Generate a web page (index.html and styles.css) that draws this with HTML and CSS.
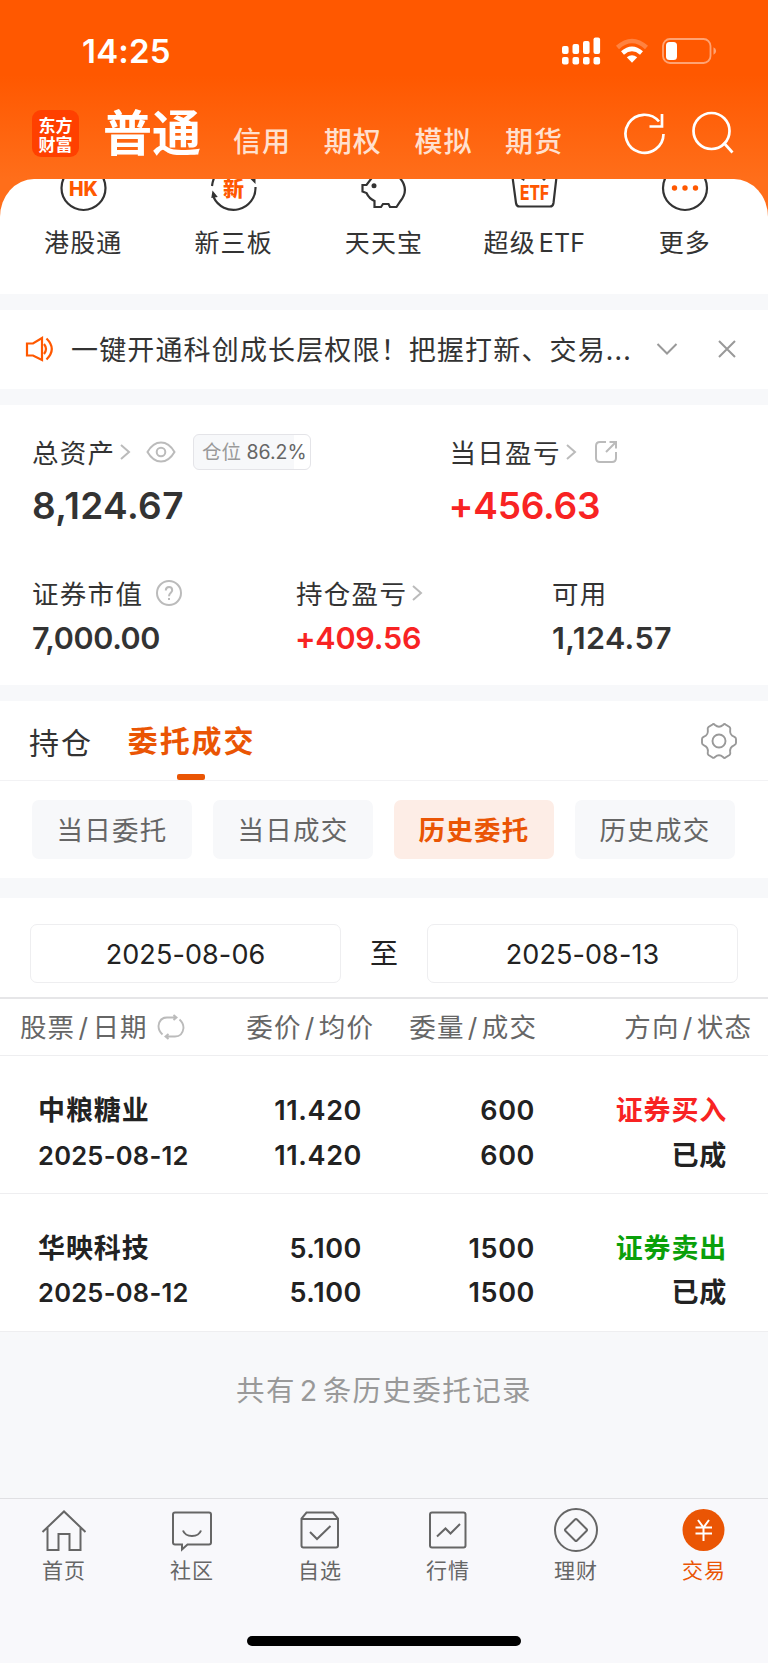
FILE: index.html
```html
<!DOCTYPE html>
<html lang="zh-CN">
<head>
<meta charset="utf-8">
<title>东方财富 交易</title>
<link rel="stylesheet" href="styles.css">
</head>
<body>
<div class="app">
  <div class="top">
    <div class="status">
      <span class="time">14:25</span>
      <svg class="signal" width="39" height="28" viewBox="0 0 39 28" fill="#fff"><rect x="0" y="9" width="6.6" height="8" rx="2"/><rect x="10.500" y="7" width="6.600" height="10" rx="2"/><rect x="21" y="4" width="6.600" height="13" rx="2"/><rect x="31.500" y="0.500" width="6.600" height="16.500" rx="2"/><rect x="0" y="20" width="6.600" height="7.500" rx="2"/><rect x="10.500" y="20" width="6.600" height="7.500" rx="2"/><rect x="21" y="20" width="6.600" height="7.500" rx="2"/><rect x="31.500" y="20" width="6.600" height="7.500" rx="2"/></svg>
      <svg class="wifi" width="34" height="26" viewBox="0 0 34 26" fill="none"><path d="M2.500 9.500Q17-3.500 31.500 9.500" stroke="#fff" stroke-opacity=".25" stroke-width="4.500"/><path d="M7.500 15Q17 6.800 26.500 15" stroke="#fff" stroke-width="4.500"/><path d="M11.800 19.300Q17 15.300 22.200 19.300L17 24.800Z" fill="#fff"/></svg>
      <svg class="battery" width="55" height="26" viewBox="0 0 55 26"><rect x="1" y="1" width="47.500" height="24" rx="7" fill="none" stroke="#fff" stroke-opacity=".45" stroke-width="1.800"/><rect x="4" y="4" width="11" height="18" rx="3.500" fill="#fff"/><path d="M51.500 9.300q2.600 1 2.600 3.700t-2.600 3.700z" fill="#fff" fill-opacity=".45"/></svg>
    </div>
    <div class="nav">
      <div class="logo"><span>东方</span><span>财富</span></div>
      <b class="nav-on">普通</b>
      <span class="nav-item">信用</span><span class="nav-item">期权</span><span class="nav-item">模拟</span><span class="nav-item">期货</span>
      <svg class="nav-icons" width="112" height="44" viewBox="0 0 112 44" fill="none" stroke="#fff" stroke-width="2.700"><path d="M40.500 23A19 19 0 1 1 36 10.500"/><path d="M39 3V15.500H26.500"/><circle cx="88.500" cy="20" r="18"/><path d="M100.500 31.500L109.500 41.500"/></svg>
    </div>
    <div class="panel">
      <div class="quick">
        <svg width="48" height="34" viewBox="0 16 48 34"><circle cx="24.500" cy="25" r="22" fill="none" stroke="#333" stroke-width="2.200"/><text class="ic" x="24.500" y="32.500" font-size="19.500">HK</text></svg>
        <span>港股通</span>
      </div>
      <div class="quick">
        <svg width="48" height="34" viewBox="0 16 48 34"><path d="M3.500 34A22 22 0 0 0 45.500 24M2 23Q2.500 19 4 15" fill="none" stroke="#333" stroke-width="2.200"/><path d="M2.500 27.500l-1.200 7.500 6.500-1zM39.500 15h6v6z" fill="#333"/><text class="ic zh" x="23.500" y="32.500" font-size="21">新</text></svg>
        <span>新三板</span>
      </div>
      <div class="quick">
        <svg width="48" height="34" viewBox="1 16 48 34"><path d="M13.500 14L7.500 22H3.500V28.500L7.500 30Q10 35.500 15.500 38V44H22L24 41H29.500L31 44H37.500L41.500 38Q51 26 40 14" fill="none" stroke="#333" stroke-width="2.200"/><circle cx="15" cy="22.700" r="2.500" fill="#333"/></svg>
        <span>天天宝</span>
      </div>
      <div class="quick">
        <svg width="48" height="34" viewBox="0 16 48 34"><path d="M2.500 14L6 40Q6.500 43.500 9.500 43.500H40Q43 43.500 43.500 40L46.500 14" fill="none" stroke="#333" stroke-width="2.200"/><path d="M9 15l5 3 1-3zM31 15l3 3 3-3z" fill="#333"/><text class="ic" x="24.500" y="36.500" font-size="19.500" textLength="29" lengthAdjust="spacingAndGlyphs">ETF</text></svg>
        <span>超级<i class="en">ETF</i></span>
      </div>
      <div class="quick">
        <svg width="48" height="34" viewBox="0 16 48 34"><circle cx="24" cy="25" r="22" fill="none" stroke="#333" stroke-width="2.200"/><g fill="#ff5800"><circle cx="13.500" cy="25" r="2.700"/><circle cx="24" cy="25" r="2.700"/><circle cx="34.500" cy="25" r="2.700"/></g></svg>
        <span>更多</span>
      </div>
    </div>
  </div>

  <div class="notice">
    <svg width="30" height="28" viewBox="0 0 30 28" fill="none" stroke="#ff5800" stroke-width="2.200"><path d="M2 8.500H8L17 3V25L8 20.500H2Z"/><path d="M19 9Q23 14 19 19M21.500 3.500Q32 14 21.500 24.500"/></svg>
    <span class="notice-text">一键开通科创成长层权限！把握打新、交易...</span>
    <svg class="chev-down" width="22" height="14" viewBox="0 0 22 14" fill="none" stroke="#999" stroke-width="2"><path d="M1.500 2L11 11.500 20.500 2"/></svg>
    <svg class="close" width="20" height="20" viewBox="0 0 20 20" fill="none" stroke="#999" stroke-width="2"><path d="M2 2L18 18M18 2L2 18"/></svg>
  </div>

  <div class="assets">
    <div class="total">
      <div class="lab">总资产<svg class="gt" width="12" height="18" viewBox="0 0 12 18"><path d="M2 2L10 9 2 16"/></svg>
        <svg class="eye" width="30" height="22" viewBox="0 0 30 22"><path d="M1.500 11Q7 1.500 15 1.500T28.500 11Q23 20.500 15 20.500T1.500 11Z"/><circle cx="15" cy="11" r="4.300"/></svg>
        <span class="pos"><span>仓位</span> 86.2%</span></div>
      <div class="big">8,124.67</div>
    </div>
    <div class="today">
      <div class="lab">当日盈亏<svg class="gt" width="12" height="18" viewBox="0 0 12 18"><path d="M2 2L10 9 2 16"/></svg>
        <svg class="share" width="24" height="24" viewBox="0 0 24 24"><path d="M12 2H6Q2 2 2 6V18Q2 22 6 22H18Q22 22 22 18V12M12 12L22 2M15.500 2H22V8.500"/></svg></div>
      <div class="big red">+456.63</div>
    </div>
    <div class="sub s1">
      <div class="lab">证券市值<svg class="help" width="26" height="26" viewBox="0 0 26 26"><circle cx="13" cy="13" r="12"/><path d="M9.800 10.500Q9.800 7 13 7T16.200 10.300C16.200 12.800 13 12.800 13 16.200M13 18V20"/></svg></div>
      <div class="mid">7,000.00</div>
    </div>
    <div class="sub s2">
      <div class="lab">持仓盈亏<svg class="gt" width="12" height="18" viewBox="0 0 12 18"><path d="M2 2L10 9 2 16"/></svg></div>
      <div class="mid red">+409.56</div>
    </div>
    <div class="sub s3">
      <div class="lab">可用</div>
      <div class="mid">1,124.57</div>
    </div>
  </div>

  <div class="tabs">
    <span>持仓</span>
    <b class="tab-on">委托成交</b>
    <svg class="gear" width="36" height="38" viewBox="1 0 36 38" fill="none" stroke="#999" stroke-width="1.900"><path d="M12.500 2.500Q13.500 1.500 15 3Q19 6.500 23 3Q24.500 1.500 25.500 2.500L29.500 5Q30.700 6 30.200 8Q29.500 12.800 34 14.700Q36 15.500 36 17V21Q36 22.500 34 23.300Q29.500 25.200 30.200 30Q30.700 32 29.500 33L25.500 35.500Q24.500 36.500 23 35Q19 31.500 15 35Q13.500 36.500 12.500 35.500L8.500 33Q7.300 32 7.800 30Q8.500 25.200 4 23.300Q2 22.500 2 21V17Q2 15.500 4 14.700Q8.500 12.800 7.800 8Q7.300 6 8.500 5Z"/><circle cx="19" cy="19" r="6.500"/></svg>
  </div>
  <div class="filters">
    <span>当日委托</span><span>当日成交</span><span class="on">历史委托</span><span>历史成交</span>
  </div>

  <div class="dates">
    <span class="date">2025-08-06</span><span class="to">至</span><span class="date">2025-08-13</span>
  </div>

  <div class="row head">
    <div class="c1">股票<i>/</i>日期<svg class="swap" width="28" height="28" viewBox="0 0 28 28"><path d="M5.500 21.500Q1.500 18 1.500 13 2.500 4.500 10 4.500H19M16.500 2L19.500 4.500 16.500 7M22.500 6.500Q26.500 10 26.500 15 25.500 23.500 18 23.500H9M11.500 21L8.500 23.500 11.500 26"/></svg></div>
    <div class="c2">委价<i>/</i>均价</div><div class="c3">委量<i>/</i>成交</div><div class="c4">方向<i>/</i>状态</div>
  </div>
  <div class="row item">
    <div class="c1"><p>中粮糖业</p><p class="day">2025-08-12</p></div>
    <div class="c2"><p>11.420</p><p>11.420</p></div>
    <div class="c3"><p>600</p><p>600</p></div>
    <div class="c4"><p class="red">证券买入</p><p>已成</p></div>
  </div>
  <div class="row item">
    <div class="c1"><p>华映科技</p><p class="day">2025-08-12</p></div>
    <div class="c2"><p>5.100</p><p>5.100</p></div>
    <div class="c3"><p>1500</p><p>1500</p></div>
    <div class="c4"><p class="green">证券卖出</p><p>已成</p></div>
  </div>

  <div class="summary">共有<i>2</i>条历史委托记录</div>

  <div class="bar">
    <div class="bar-items">
      <div><svg width="46" height="46" viewBox="0 0 46 46"><path d="M1.500 24L23 3.500 44.500 24M6.500 20V42H17.500V26H28.500V42H39.500V20"/></svg><span>首页</span></div>
      <div><svg width="46" height="46" viewBox="0 0 46 46"><path d="M6 4.500H40Q42 4.500 42 6.500V34.500Q42 36.500 40 36.500H18.500L13 41.500V36.500H6Q4 36.500 4 34.500V6.500Q4 4.500 6 4.500ZM14 22.500Q16 28 23 28T32 22.500"/></svg><span>社区</span></div>
      <div><svg width="46" height="46" viewBox="0 0 46 46"><path d="M9.500 4.500H36L41 10.500V37.500Q41 39.500 39 39.500H6.500Q4.500 39.500 4.500 37.500V10.500ZM5 11H41M13 24L20 31 33.500 18"/></svg><span>自选</span></div>
      <div><svg width="46" height="46" viewBox="0 0 46 46"><rect x="5" y="4.500" width="35.500" height="35" rx="2"/><path d="M12 28.500L20.500 20.500 25.500 25.500 35 16"/></svg><span>行情</span></div>
      <div><svg width="46" height="46" viewBox="0 0 46 46"><circle cx="23" cy="22" r="21"/><path d="M22 11.500Q23 10.500 24 11.500L33.500 21Q34.500 22 33.500 23L24 32.500Q23 33.500 22 32.500L12.500 23Q11.500 22 12.500 21Z"/></svg><span>理财</span></div>
      <div class="cur"><svg width="46" height="46" viewBox="0 0 46 46"><circle class="disc" cx="22.500" cy="22" r="21"/><path d="M17 12L22.500 19.500 28 12M22.500 19V33M14.500 19.500H31M14.500 25.500H31"/></svg><span>交易</span></div>
    </div>
    <div class="home"></div>
  </div>
</div>
</body>
</html>
```
FILE: styles.css
```css
* { box-sizing: border-box; }
body { margin: 0; background: #f7f8fa; }
p { margin: 0; }
i { font-style: normal; }
svg { display: block; flex: none; }
.app {
  width: 768px; height: 1663px; overflow: hidden;
  display: flex; flex-direction: column;
  font-family: Inter, "Noto Sans CJK SC", sans-serif;
  color: #333; white-space: nowrap;
}
.red { color: #f82323; }
.green { color: #0aa00a; }

.top { height: 294px; background: linear-gradient(#ff5800 0, #ff5800 75px, #ff6e1a 179px); }
.status { height: 104px; display: flex; align-items: flex-start; padding: 37px 0 0 82px; }
.time { width: 479.500px; font-size: 33px; line-height: 28px; font-weight: 600; color: #fff; letter-spacing: .2px; }
.signal { margin-right: 14px; }
.wifi { margin: 1px 13.500px 0 0; }
.battery { margin-top: 1px; }
.nav { height: 75px; display: flex; align-items: flex-start; padding-left: 32px; color: #fff; }
.logo {
  width: 47px; height: 47px; margin: 6px 24px 0 0; border-radius: 9px; background: #ff4000;
  display: grid; grid-template-rows: 19px 19px; align-content: center; justify-items: center;
  font: 700 17px/19px "Noto Sans CJK SC", sans-serif;
}
.nav-on { width: 130px; font-size: 49px; line-height: 60px; }
.nav-item { width: 90.700px; font-size: 28px; line-height: 40px; margin-top: 18px; font-weight: 500; letter-spacing: 1px; color: #ffe0cf; }
.nav-icons { margin: 7px 0 0 27.500px; }
.panel { height: 115px; background: #fff; border-radius: 34px 34px 0 0 / 38px 38px 0 0; display: flex; padding: 0 8px; }
.quick { flex: 1; display: flex; flex-direction: column; align-items: center; font-size: 25px; line-height: 36px; letter-spacing: 1.100px; }
.quick span { margin-top: 11.500px; }
.quick .en { margin-left: 3px; letter-spacing: .2px; }
.ic { fill: #ff5800; font-weight: 800; text-anchor: middle; letter-spacing: 0; }
.zh { font-family: "Noto Sans CJK SC", sans-serif; font-weight: 900; }

.notice { height: 79px; margin: 16px 0; background: #fff; display: flex; align-items: center; padding-left: 25px; }
.notice-text { width: 575px; margin: -2px 0 0 16px; font-size: 27px; letter-spacing: 1.150px; font-family: "Noto Sans CJK SC", sans-serif; }
.chev-down { margin-left: 10px; }
.close { margin-left: 38.500px; }

.assets {
  height: 281px; background: #fff; padding: 28px 0 0 32px;
  display: grid; grid-template-columns: 264px 154px 101px 1fr; grid-template-rows: 141px 1fr;
}
.total { grid-column: 1 / 3; }
.today { grid-column: 3 / 5; margin-left: -.5px; }
.s2 { grid-column: 2 / 4; }
.s3 { padding-left: 1px; }
.lab { height: 38px; display: flex; align-items: center; font-size: 26.500px; letter-spacing: 1.300px; }
.lab svg { fill: none; stroke: #bbb; stroke-width: 2; }
.gt { margin-left: 4px; }
.eye { margin-left: 15px; }
.share { margin-left: 17.500px; }
.help { margin-left: 13px; }
.pos {
  height: 36px; width: 118px; margin-left: 16.500px; padding-left: 8px; border: 1px solid #e4e4e8; border-radius: 6px;
  background: linear-gradient(90deg, #f7f8fa 86.200%, #fff 86.200%);
  font-size: 19.500px; line-height: 35px; letter-spacing: 0; color: #666;
}
.pos span { color: #999; }
.big { font-size: 37px; line-height: 50px; font-weight: 600; margin-top: 10.500px; letter-spacing: .4px; }
.today .big { letter-spacing: -.2px; margin-left: -1px; }
.mid { font-size: 30.500px; line-height: 40px; font-weight: 600; margin-top: 6px; }
.s1 .mid { letter-spacing: -.4px; }
.s2 .mid { letter-spacing: -.2px; margin-left: -1px; }
.s3 .mid { letter-spacing: .4px; }

.tabs { height: 80px; margin-top: 16px; background: #fff; border-bottom: 1px solid #f2f2f4; display: flex; align-items: center; padding: 0 31px 0 29px; font-size: 30px; letter-spacing: 1.900px; }
.tab-on { margin-left: 35px; height: 79px; line-height: 80px; color: #ea5504; position: relative; }
.tab-on::after { content: ""; position: absolute; left: 49.500px; bottom: 0; width: 28px; height: 6px; border-radius: 2px; background: #ea5504; }
.gear { margin: 1px 0 0 auto; }
.filters { height: 97px; background: #fff; display: grid; grid-template-columns: repeat(4, 160px); column-gap: 21px; padding: 19px 0 0 32px; }
.filters span { height: 59px; border-radius: 7px; background: #f7f8fa; color: #666; font-size: 26.500px; line-height: 61px; letter-spacing: 1.200px; text-align: center; }
.filters .on { background: #fdede6; color: #ea5504; font-weight: 700; }

.dates { height: 99px; margin-top: 20px; background: #fff; display: flex; align-items: flex-start; padding: 26px 30px 0; color: #222; }
.date { width: 311px; height: 59px; border: 1px solid #eeeef0; border-radius: 7px; text-align: center; font-size: 27px; line-height: 59px; letter-spacing: .1px; }
.to { flex: 1; text-align: center; font-size: 28px; line-height: 60px; }

.row { display: grid; grid-template-columns: 200px 154px 163px 1fr; background: #fff; border-bottom: 1px solid #eeeef0; }
.head { height: 59px; border-top: 2px solid #e6e6e8; padding: 0 16px 0 20px; color: #666; font-size: 26.500px; line-height: 56px; letter-spacing: 1.100px; text-align: right; }
.head i { margin: 0 3.300px; }
.head .c1 { display: flex; align-items: center; }
.swap { margin-left: 9px; fill: none; stroke: #bbb; stroke-width: 1.900; }
.item { height: 138px; padding: 33px 41px 0 38px; font-size: 27px; line-height: 44.500px; font-weight: 600; color: #222; text-align: right; letter-spacing: .6px; grid-template-columns: 200px 124px 173px 1fr; }
.item .c1 { text-align: left; letter-spacing: .9px; }
.item .day { font-size: 25.500px; letter-spacing: .25px; }
.item .c4 { letter-spacing: .8px; }

.summary { height: 167px; background: #f7f8fa; text-align: center; padding-top: 36px; font-size: 28.500px; line-height: 46px; letter-spacing: 1.400px; color: #999; }
.summary i { margin: 0 4px; }
.bar { height: 165px; border-top: 1px solid #e0e0e3; background: #f8f8fb; display: flex; flex-direction: column; align-items: center; }
.bar-items { width: 100%; height: 137px; display: grid; grid-template-columns: repeat(6, 1fr); padding-top: 9px; }
.bar-items div { display: flex; flex-direction: column; align-items: center; font-size: 21px; line-height: 30px; letter-spacing: 1px; color: #666; }
.bar-items svg { fill: none; stroke: #666; stroke-width: 2; }
.bar-items span { margin-top: 2px; }
.bar-items .cur { color: #ea5504; }
.bar-items .cur svg { stroke: #fff; }
.bar-items .disc { fill: #ea5504; stroke: none; }
.home { width: 274px; height: 10px; border-radius: 5px; background: #000; }
```
